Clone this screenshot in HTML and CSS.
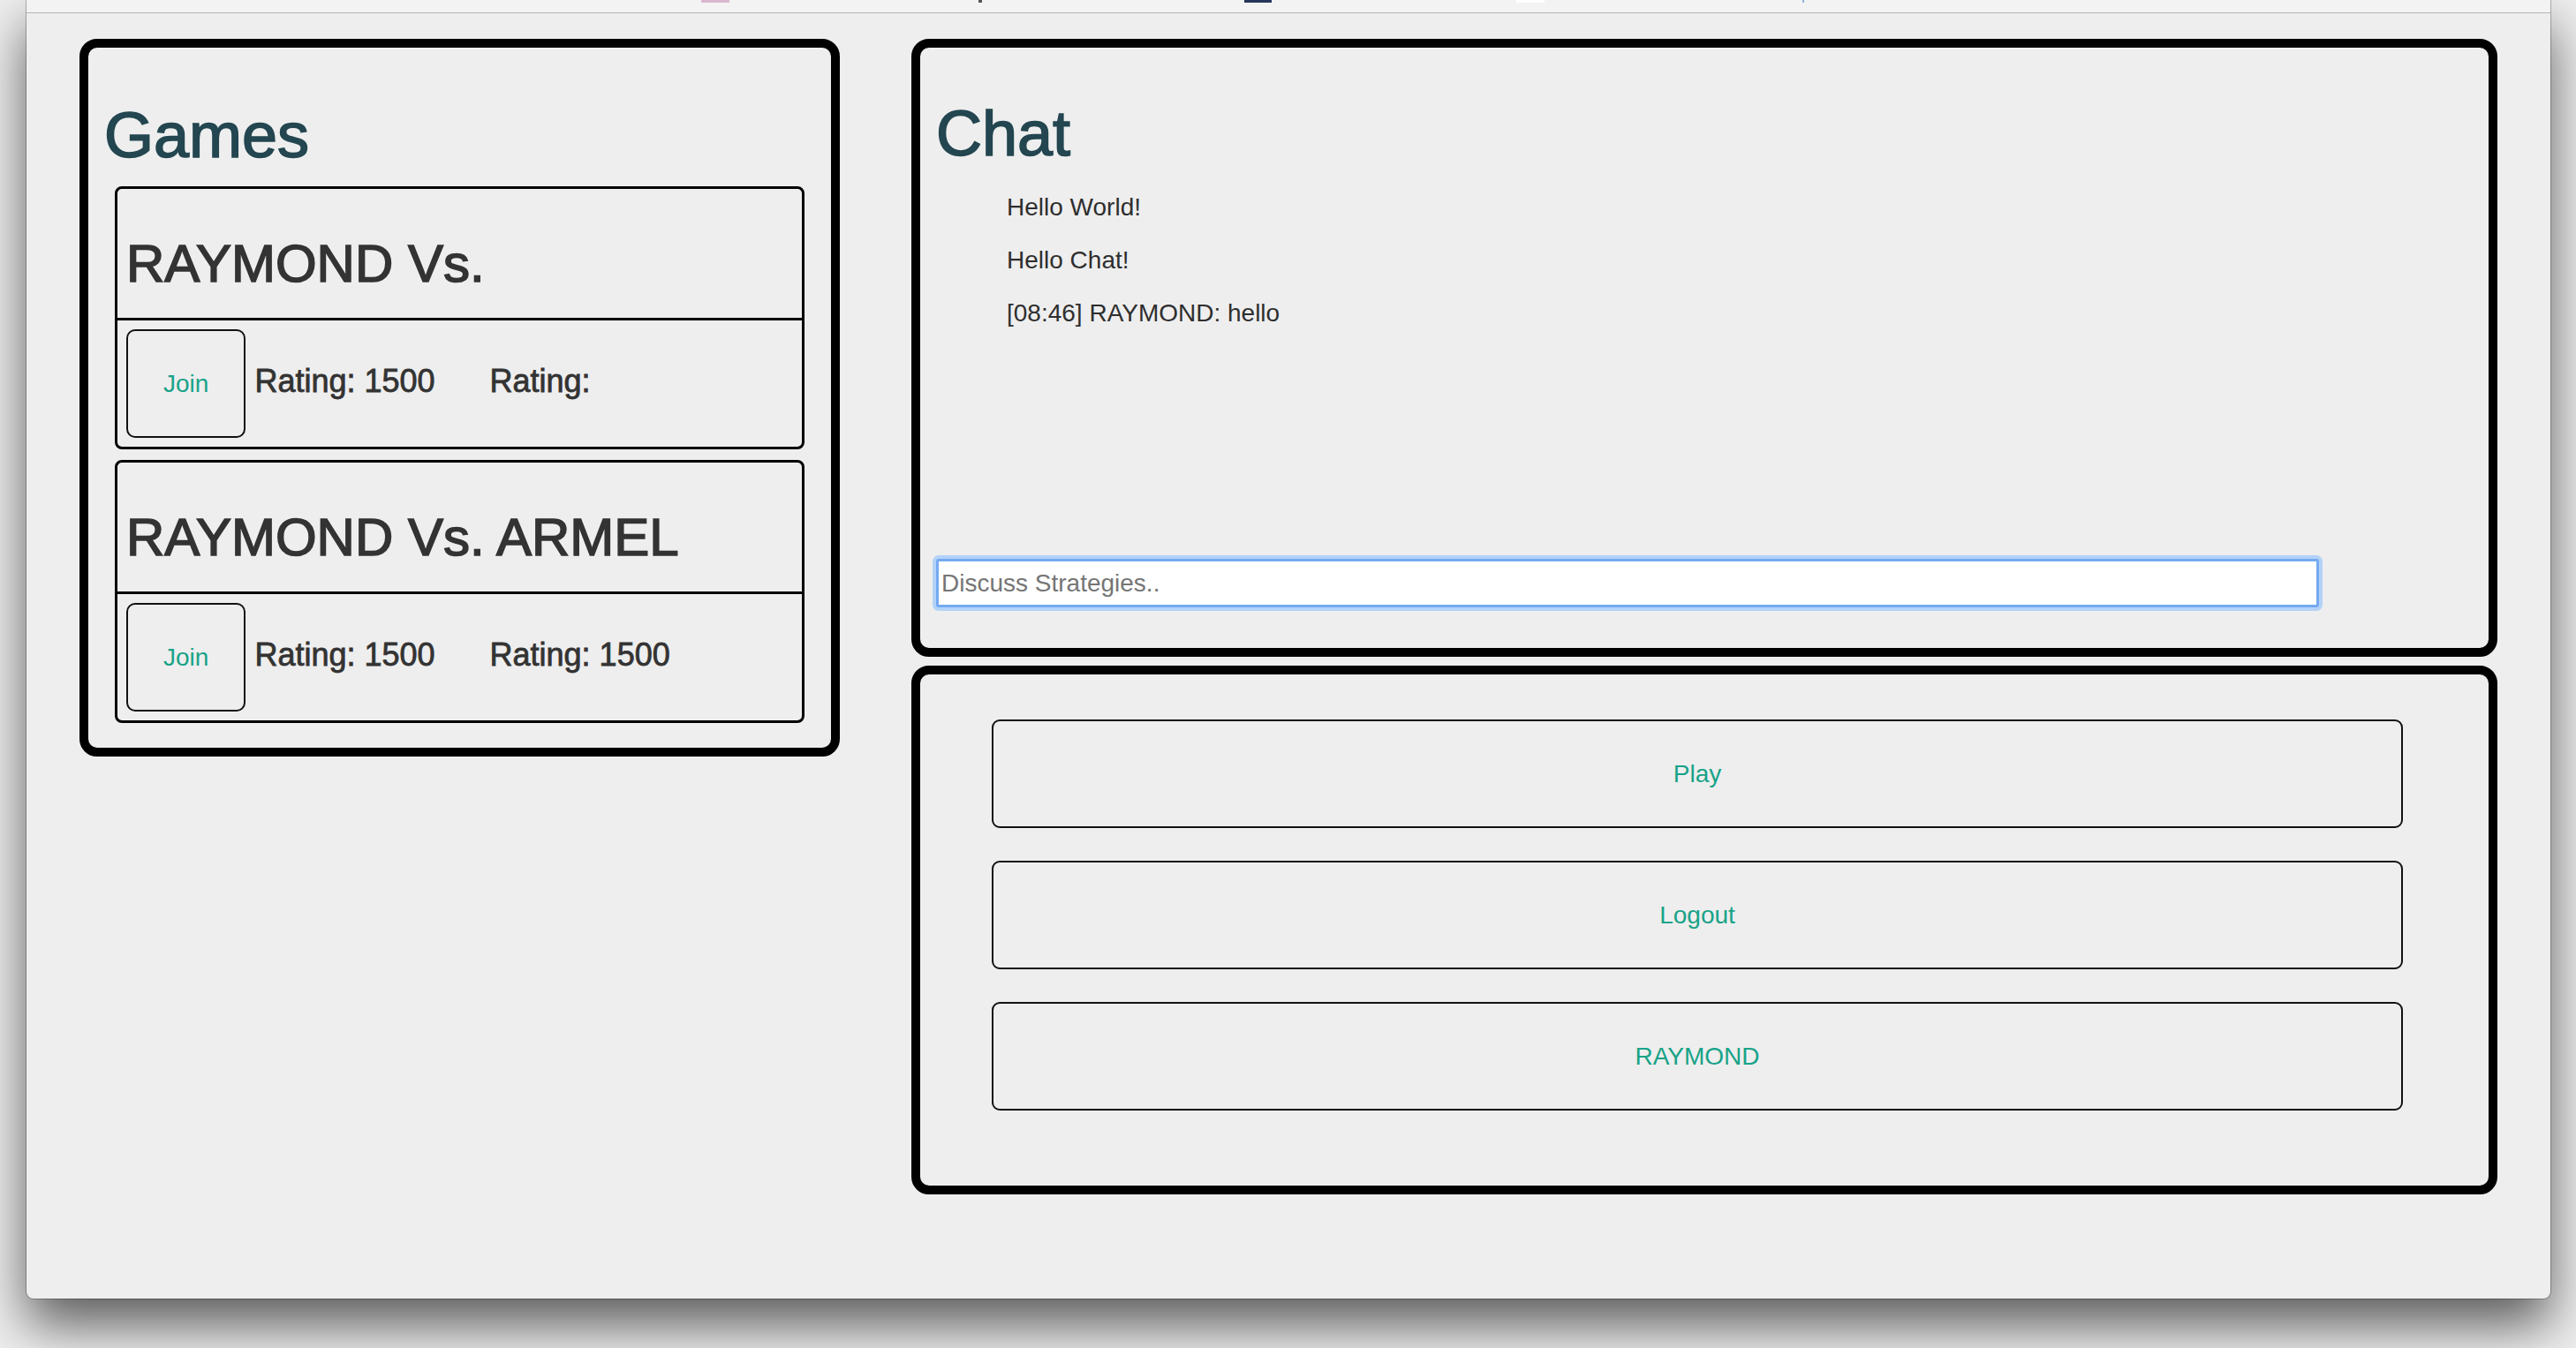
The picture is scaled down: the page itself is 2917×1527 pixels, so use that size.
FILE: index.html
```html
<!DOCTYPE html>
<html lang="en">
<head>
  <meta charset="UTF-8">
  <title>Lobby</title>
  <link rel="stylesheet" href="styles.css">
</head>
<body>

  <div class="window">
    <!-- bottom edge of the browser toolbar -->
    <div class="toolbar">
      <span class="fav fav-pink"></span>
      <span class="fav fav-dark"></span>
      <span class="fav fav-navy"></span>
      <span class="fav fav-white"></span>
      <span class="fav fav-blue"></span>
    </div>

    <div class="page">
      <!-- games list -->
      <div class="panel games">
        <h1>Games</h1>

        <div class="game">
          <div class="game-head"><h2>RAYMOND Vs. </h2></div>
          <div class="game-body"><button class="btn join">Join</button> <span class="rating">Rating: 1500</span><span class="rating second">Rating: </span></div>
        </div>

        <div class="game">
          <div class="game-head"><h2>RAYMOND Vs. ARMEL</h2></div>
          <div class="game-body"><button class="btn join">Join</button> <span class="rating">Rating: 1500</span><span class="rating second">Rating: 1500</span></div>
        </div>
      </div>

      <div class="side">
        <!-- chat -->
        <div class="panel chat">
          <h1>Chat</h1>
          <div class="messages">
            <ul>
              <li>Hello World!</li>
              <li>Hello Chat!</li>
              <li>[08:46] RAYMOND: hello</li>
            </ul>
          </div>
          <input type="text" class="chat-input" placeholder="Discuss Strategies..">
        </div>

        <!-- actions -->
        <div class="panel actions">
          <button class="btn wide">Play</button>
          <button class="btn wide">Logout</button>
          <button class="btn wide">RAYMOND</button>
        </div>
      </div>
    </div>
  </div>

</body>
</html>
```

FILE: styles.css
```css
* {
  box-sizing: border-box;
}
body {
  margin: 0;
  height: 1527px;
  overflow: hidden;
  background-color: #efefef;
  font-family: 'Liberation Sans', Arial, sans-serif;
  color: #333;
}
.window {
  margin-left: 30px;
  width: 2858px;
  height: 1471px;
  background-color: #eeeeee;
  border-radius: 0 0 8px 8px;
  box-shadow: 0 30px 60px rgba(0, 0, 0, 0.62), 0 0 0 1px rgba(0, 0, 0, 0.25);
  overflow: hidden;
}
.toolbar {
  height: 15px;
  background-color: #f3f3f3;
  border-bottom: 1px solid #b6b6b6;
  display: flex;
  align-items: flex-start;
  padding-left: 764px;
}
.fav {
  height: 3px;
}
.fav-pink {
  width: 32px;
  background-color: #d9b8cf;
}
.fav-dark {
  width: 4px;
  margin-left: 282px;
  background-color: #555;
}
.fav-navy {
  width: 31px;
  margin-left: 297px;
  background-color: #27365a;
}
.fav-white {
  width: 32px;
  margin-left: 277px;
  background-color: #fff;
}
.fav-blue {
  width: 2px;
  margin-left: 292px;
  background-color: #8fb3d6;
}
.page {
  display: flex;
  align-items: flex-start;
  gap: 81px;
  padding: 29px 60px 0;
}
.panel {
  border: 10px solid #000;
  border-radius: 20px;
  padding: 18px;
}
.games {
  width: 861px;
  padding-bottom: 16px;
}
.side {
  width: 1796px;
  display: flex;
  flex-direction: column;
  gap: 10px;
}
h1 {
  font-size: 72px;
  font-weight: normal;
  line-height: 79px;
  color: #234650;
  -webkit-text-stroke: 1.6px #234650;
  margin: 42px 0 18px;
}
.chat h1 {
  margin-top: 40px;
}
h2 {
  font-size: 60px;
  font-weight: normal;
  line-height: 66px;
  color: #333;
  -webkit-text-stroke: 1.6px #333;
  margin: 42px 0 18px;
}
.game {
  margin: 12px;
  border: 3px solid #000;
  border-radius: 8px;
}
.game-head {
  padding: 10px;
  border-bottom: 3px solid #000;
}
.game-body {
  padding: 10px;
  font-size: 36px;
}
.rating {
  -webkit-text-stroke: 0.8px #333;
}
.rating.second {
  margin-left: 62px;
}
.btn {
  font-family: 'Liberation Sans', Arial, sans-serif;
  font-size: 28px;
  line-height: 39px;
  color: #17a388;
  background-color: transparent;
  border: 2px solid #111;
  border-radius: 10px;
  padding: 40px;
  cursor: pointer;
}
.wide {
  display: block;
  width: 100%;
  padding: 40px 0;
  border-radius: 9px;
}
.messages {
  height: 414px;
}
.messages ul {
  list-style: none;
  margin: 0;
  padding-left: 80px;
}
.messages li {
  margin: 28px 0;
  font-size: 28px;
  color: #2e2e2e;
}
.chat-input {
  display: block;
  width: 90%;
  height: 55px;
  margin: 0 0 28px;
  padding: 0 3px;
  font-family: 'Liberation Sans', Arial, sans-serif;
  font-size: 28px;
  color: #333;
  background-color: #fff;
  border: 3px solid #74aaf1;
  border-radius: 3px;
  box-shadow: 0 0 0 4px #b3d2f8;
  outline: none;
}
.chat-input::placeholder {
  color: #757575;
}
.actions {
  display: flex;
  flex-direction: column;
  gap: 37px;
  padding: 51px 97px 85px 81px;
}
```
